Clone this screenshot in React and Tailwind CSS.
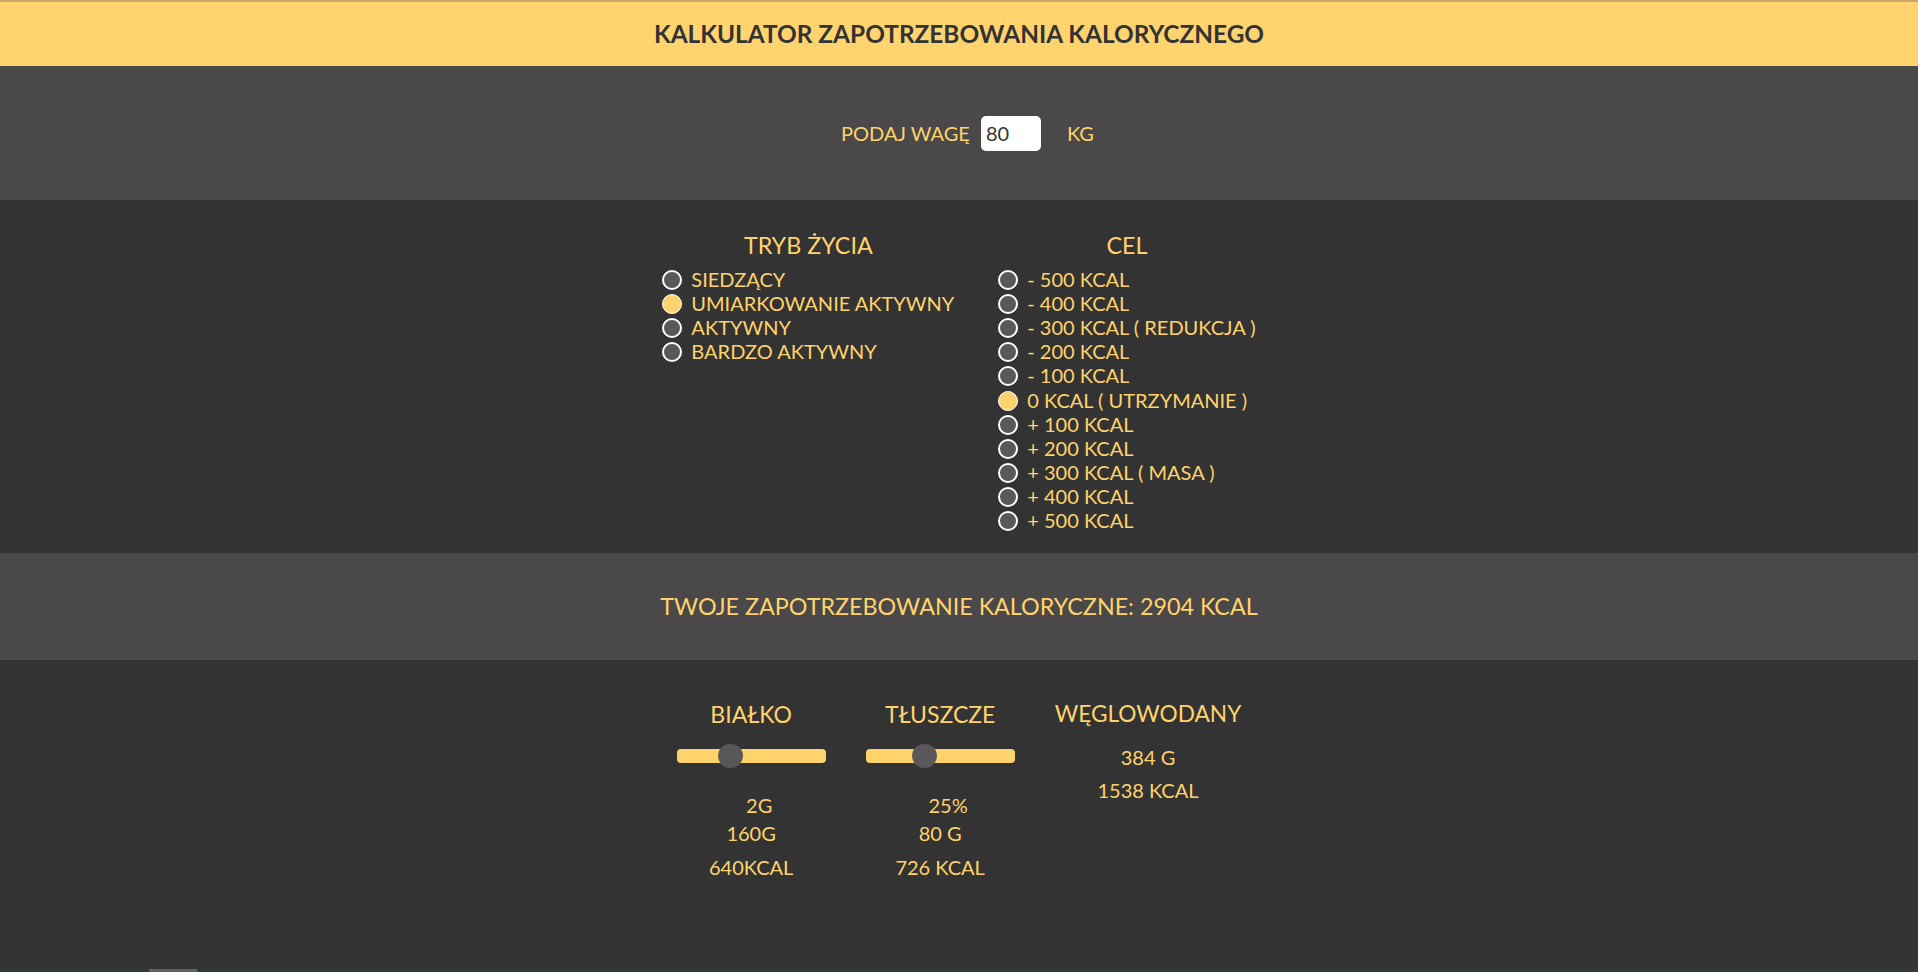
const lifestyle = [
  { label: "SIEDZĄCY" },
  { label: "UMIARKOWANIE AKTYWNY", checked: true },
  { label: "AKTYWNY" },
  { label: "BARDZO AKTYWNY" },
];

const goals = [
  { label: "- 500 KCAL" },
  { label: "- 400 KCAL" },
  { label: "- 300 KCAL ( REDUKCJA )" },
  { label: "- 200 KCAL" },
  { label: "- 100 KCAL" },
  { label: "0 KCAL ( UTRZYMANIE )", checked: true },
  { label: "+ 100 KCAL" },
  { label: "+ 200 KCAL" },
  { label: "+ 300 KCAL ( MASA )" },
  { label: "+ 400 KCAL" },
  { label: "+ 500 KCAL" },
];

const Radio = ({ label, checked }) => (
  <div className="flex h-[24.1px] items-center">
    {checked ? (
      <span className="mt-[2px] h-[20px] w-[20px] shrink-0 rounded-full border border-white bg-[#ffd36b]" />
    ) : (
      <span className="mt-[2px] h-[20px] w-[20px] shrink-0 rounded-full border-2 border-white bg-[#585858]" />
    )}
    <span className="ml-[9px] whitespace-nowrap text-[20px] leading-none">{label}</span>
  </div>
);

const Slider = ({ fraction }) => (
  <div className="relative mt-[21px] h-[14px] w-[149px] rounded-[4px] bg-[#ffd36b]">
    <span
      className="absolute top-[-5px] h-[24px] w-[25px] rounded-full bg-[#585858]"
      style={{ left: `${fraction * 124}px` }}
    />
  </div>
);

export default function App() {
  return (
    <div className="flex min-h-screen flex-col bg-[#333333] font-['Lato',sans-serif] text-[#ffd36b]">
      <header className="flex h-[66px] items-center justify-center border-t-2 border-[#c9a46b] bg-[#ffd36e]">
        <h1 className="text-[24.4px] font-bold text-[#333333]">KALKULATOR ZAPOTRZEBOWANIA KALORYCZNEGO</h1>
      </header>

      <section className="flex h-[134px] items-center justify-center bg-[#4a4849] pl-[17px]">
        <span className="text-[20px]">PODAJ WAGĘ</span>
        <input
          defaultValue="80"
          className="ml-[11px] h-[35px] w-[60px] rounded-[5px] bg-white px-[5px] text-[20px] text-[#333] outline-none"
        />
        <span className="ml-[26px] text-[20px]">KG</span>
      </section>

      <section className="flex h-[353px] justify-center gap-[44px] bg-[#333333] pt-[31px]">
        <div>
          <h2 className="text-center text-[23.3px] leading-[28px]">TRYB ŻYCIA</h2>
          <div className="mt-[8px]">
            {lifestyle.map((r) => (
              <Radio key={r.label} {...r} />
            ))}
          </div>
        </div>
        <div>
          <h2 className="text-center text-[23.3px] leading-[28px]">CEL</h2>
          <div className="mt-[8px]">
            {goals.map((r) => (
              <Radio key={r.label} {...r} />
            ))}
          </div>
        </div>
      </section>

      <section className="flex h-[107px] items-center justify-center bg-[#4a4849]">
        <p className="text-[23.3px]">TWOJE ZAPOTRZEBOWANIE KALORYCZNE: 2904 KCAL</p>
      </section>

      <section className="flex flex-1 justify-center gap-[40px] bg-[#333333] pt-[40px]">
        <div className="flex w-[149px] flex-col items-center">
          <h3 className="text-[23px] leading-[28px]">BIAŁKO</h3>
          <Slider fraction={0.333} />
          <p className="mt-[30px] pl-[16px] text-[20px] leading-[24px]">2G</p>
          <p className="mt-[4px] text-[20px] leading-[24px]">160G</p>
          <p className="mt-[10px] text-[20px] leading-[24px]">640KCAL</p>
        </div>
        <div className="flex w-[149px] flex-col items-center">
          <h3 className="text-[23px] leading-[28px]">TŁUSZCZE</h3>
          <Slider fraction={0.37} />
          <p className="mt-[30px] pl-[16px] text-[20px] leading-[24px]">25%</p>
          <p className="mt-[4px] text-[20px] leading-[24px]">80 G</p>
          <p className="mt-[10px] text-[20px] leading-[24px]">726 KCAL</p>
        </div>
        <div className="flex flex-col items-center">
          <h3 className="text-[22.7px] leading-[28px]">WĘGLOWODANY</h3>
          <p className="mt-[17px] text-[20px] leading-[24px]">384 G</p>
          <p className="mt-[9px] text-[20px] leading-[24px]">1538 KCAL</p>
        </div>
      </section>

      <div className="flex h-[3px] bg-[#2e3c3c]">
        <span className="ml-[149px] w-[48px] bg-[#5b6464]" />
      </div>
    </div>
  );
}
